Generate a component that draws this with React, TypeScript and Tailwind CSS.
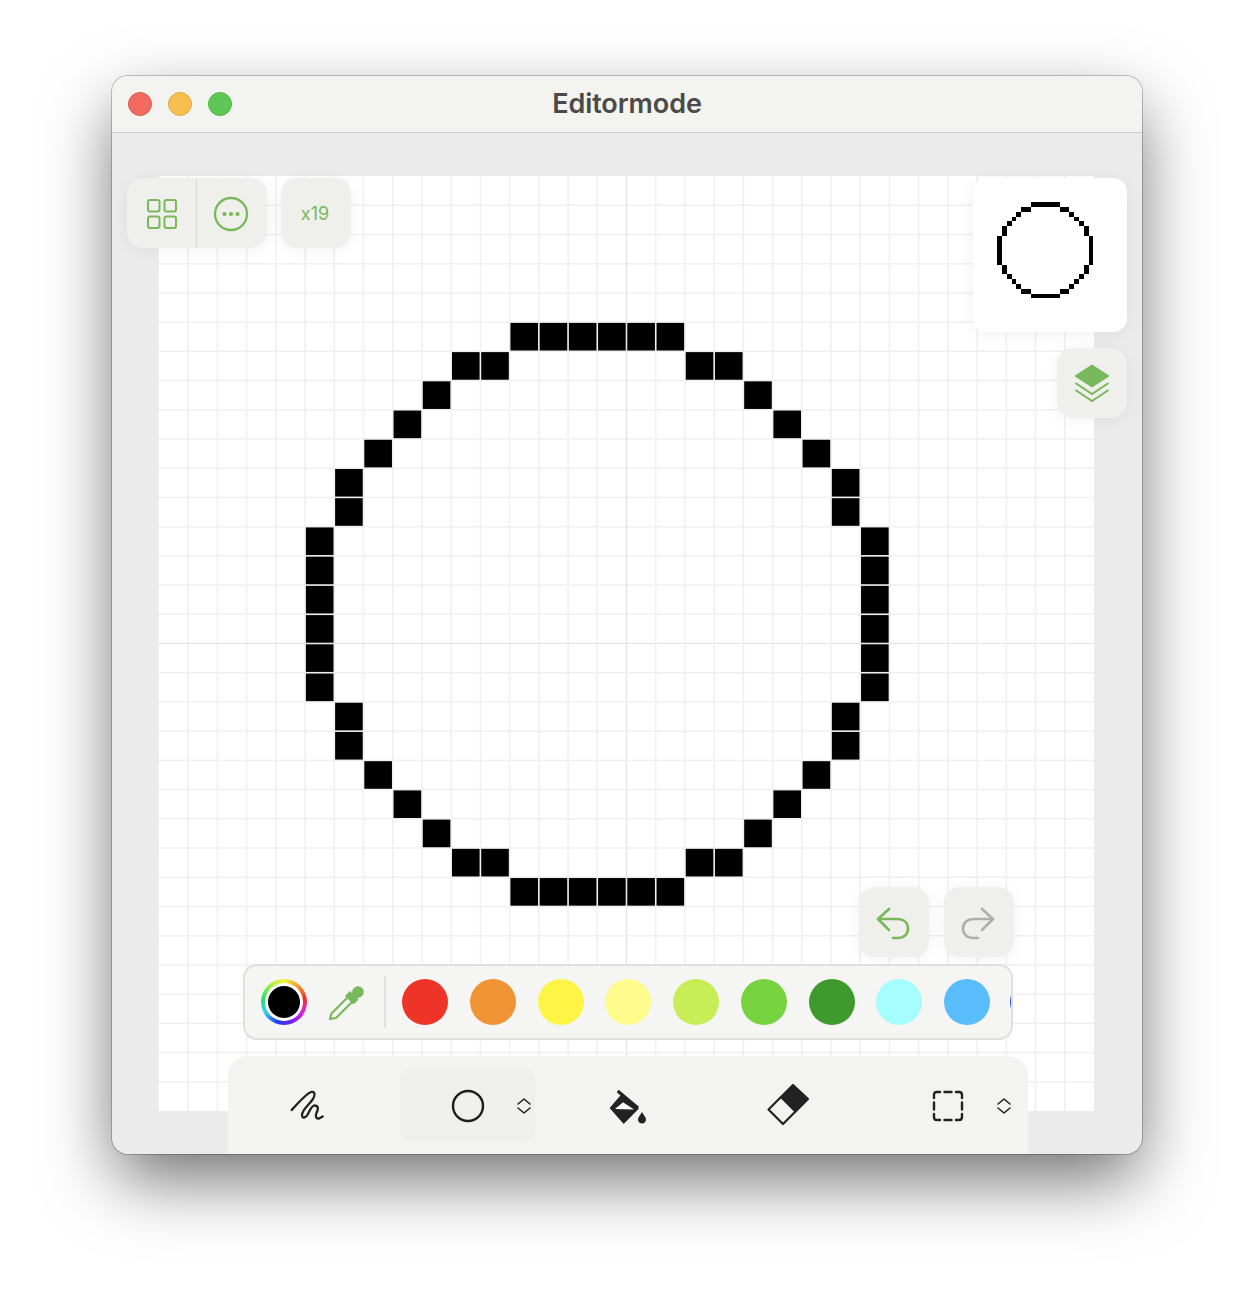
import React from "react";

const GREEN = "#7ab85c";
const CELL = 935 / 32;

const ROWS: [number, number[]][] = [
  [5, [12, 13, 14, 15, 16, 17]],
  [6, [10, 11, 18, 19]],
  [7, [9, 20]],
  [8, [8, 21]],
  [9, [7, 22]],
  [10, [6, 23]],
  [11, [6, 23]],
  [12, [5, 24]],
  [13, [5, 24]],
  [14, [5, 24]],
  [15, [5, 24]],
  [16, [5, 24]],
  [17, [5, 24]],
  [18, [6, 23]],
  [19, [6, 23]],
  [20, [7, 22]],
  [21, [8, 21]],
  [22, [9, 20]],
  [23, [10, 11, 18, 19]],
  [24, [12, 13, 14, 15, 16, 17]],
];
const PIXELS = ROWS.flatMap(([r, cs]) => cs.map((c) => ({ r, c })));
const LINES = Array.from({ length: 31 }, (_, i) => i + 1);
const SWATCHES = ["#ee3428", "#f19436", "#fdf445", "#fffb8d", "#c8ee57", "#76d23e", "#3f9a2e", "#a6fdfd", "#59bcfb"];

function PixelCanvas() {
  return (
    <svg width="935" height="935" viewBox="0 0 935 935" className="block">
      <rect width="935" height="935" fill="#fff" />
      {LINES.map((i) => (
        <g key={i} stroke={i === 16 ? "#e2e2e2" : "#f0f0f0"} strokeWidth={i === 16 ? 1.2 : 1.5}>
          <line x1={i * CELL} x2={i * CELL} y1="0" y2="935" />
          <line y1={i * CELL} y2={i * CELL} x1="0" x2="935" />
        </g>
      ))}
      {PIXELS.map(({ r, c }) => (
        <rect key={`${r}-${c}`} x={c * CELL + 0.8} y={r * CELL + 0.8} width={CELL - 1.6} height={CELL - 1.6} fill="#000" />
      ))}
    </svg>
  );
}

function Preview() {
  return (
    <svg width="154" height="154" viewBox="0 0 32 32" className="block" shapeRendering="crispEdges">
      {PIXELS.map(({ r, c }) => (
        <rect key={`${r}-${c}`} x={c} y={r} width="1" height="1" fill="#000" />
      ))}
    </svg>
  );
}

function Chevrons() {
  return (
    <svg width="16" height="18" viewBox="0 0 16 18" fill="none" stroke="#222" strokeWidth="1.6" strokeLinejoin="round" strokeLinecap="round">
      <path d="M2 7 L8 2 L14 7" />
      <path d="M2 11 L8 16 L14 11" />
    </svg>
  );
}

const floatBtn = "bg-[#efefeb] shadow-[0_2px_16px_rgba(0,0,0,0.06)] flex items-center justify-center";

export default function App() {
  return (
    <div className="h-[1302px] w-full overflow-hidden bg-white pl-[112px] pt-[76px]" style={{ fontFamily: "Inter, 'Liberation Sans', sans-serif" }}>
      <div className="relative flex h-[1078px] w-[1030px] flex-col overflow-hidden rounded-[16px] bg-[#ebebeb] shadow-[0_0_0_1px_rgba(0,0,0,0.22),0_28px_70px_-4px_rgba(0,0,0,0.58)]">
        {/* Title bar */}
        <div className="relative flex h-[57px] shrink-0 items-center justify-center border-b border-[#c9c9c6] bg-[#f3f3ef] pb-[2px]">
          <div className="absolute left-[16px] top-[16px] flex gap-[16px]">
            <div className="h-[24px] w-[24px] rounded-full border border-[#dc5a50] bg-[#f2695e]" />
            <div className="h-[24px] w-[24px] rounded-full border border-[#deaa42] bg-[#f7bf4f]" />
            <div className="h-[24px] w-[24px] rounded-full border border-[#55b548] bg-[#5fc754]" />
          </div>
          <span className="text-[27px] font-semibold leading-none tracking-[-0.1px] text-[#4a4a4a]">Editormode</span>
        </div>

        {/* Canvas */}
        <div className="px-[47px] pt-[43px]">
          <PixelCanvas />
        </div>

        {/* Top-left controls */}
        <div className={`${floatBtn} absolute left-[15px] top-[102px] h-[70px] w-[140px] rounded-[16px]`}>
          <div className="flex h-full w-[70px] items-center justify-center border-r-[1.5px] border-[#d9d9d5] pl-[1px] pt-[1px]">
            <svg width="32" height="32" viewBox="0 0 32 32" fill="none" stroke={GREEN} strokeWidth="2">
              <rect x="2" y="2" width="11.500" height="11.500" rx="2" />
              <rect x="18.500" y="2" width="11.500" height="11.500" rx="2" />
              <rect x="2" y="18.500" width="11.500" height="11.500" rx="2" />
              <rect x="18.500" y="18.500" width="11.500" height="11.500" rx="2" />
            </svg>
          </div>
          <div className="flex h-full w-[70px] items-center justify-center pr-[2px] pt-[1px]">
            <svg width="36" height="36" viewBox="0 0 36 36" fill="none">
              <circle cx="18" cy="18" r="16" stroke={GREEN} strokeWidth="2.3" />
              <circle cx="11.500" cy="18" r="2.100" fill={GREEN} />
              <circle cx="18" cy="18" r="2.100" fill={GREEN} />
              <circle cx="24.500" cy="18" r="2.100" fill={GREEN} />
            </svg>
          </div>
        </div>
        <div className={`${floatBtn} absolute left-[169px] top-[102px] h-[70px] w-[70px] rounded-[16px] pr-[2px] pt-[1px] text-[18px] text-[#7ab85c]`}>x19</div>

        {/* Preview + layers */}
        <div className="absolute left-[861px] top-[102px] h-[154px] w-[154px] rounded-[14px] bg-white shadow-[0_2px_16px_rgba(0,0,0,0.06)]">
          <Preview />
        </div>
        <div className={`${floatBtn} absolute left-[945px] top-[272px] h-[70px] w-[70px] rounded-[16px]`}>
          <svg width="36" height="38" viewBox="0 0 36 38" fill="none">
            <path d="M18 1 L35 12 L18 23 L1 12 Z" fill={GREEN} stroke={GREEN} strokeLinejoin="round" />
            <path d="M1.500 19 L18 30 L34.500 19" stroke={GREEN} strokeWidth="2" />
            <path d="M1.500 26 L18 37 L34.500 26" stroke={GREEN} strokeWidth="2" />
          </svg>
        </div>

        {/* Undo / redo */}
        <div className={`${floatBtn} absolute left-[747px] top-[811px] h-[70px] w-[70px] rounded-[16px] pr-[2px] pt-[2px]`}>
          <svg width="36" height="36" viewBox="0 0 36 36" fill="none" stroke={GREEN} strokeWidth="2.600" strokeLinecap="round" strokeLinejoin="round">
            <path d="M14 4 L3 14 L14 25" />
            <path d="M3 14 H22 C29 14 33 18 33 23.500 C33 29 29 33 23 33 H18" />
          </svg>
        </div>
        <div className={`${floatBtn} absolute left-[832px] top-[811px] h-[70px] w-[70px] rounded-[16px] pr-[2px] pt-[2px]`}>
          <svg width="36" height="36" viewBox="0 0 36 36" fill="none" stroke="#aeaeae" strokeWidth="2.600" strokeLinecap="round" strokeLinejoin="round">
            <path d="M22 4 L33 14 L22 25" />
            <path d="M33 14 H14 C7 14 3 18 3 23.500 C3 29 7 33 13 33 H18" />
          </svg>
        </div>

        {/* Palette */}
        <div className="absolute left-[131px] top-[888px] flex h-[76px] w-[770px] items-center gap-[20px] overflow-hidden rounded-[14px] border-2 border-[#dfdfdb] bg-[#f5f5f3] pl-[16px]">
          <div className="flex h-[46px] w-[46px] shrink-0 items-center justify-center rounded-full bg-[conic-gradient(#f5f53a,#f0a030,#ee3030,#e020e0,#7020f0,#2040f0,#30d0f0,#30e060,#a0f040,#f5f53a)]">
            <div className="flex h-[38px] w-[38px] items-center justify-center rounded-full bg-white">
              <div className="h-[32px] w-[32px] rounded-full bg-black" />
            </div>
          </div>
          <svg width="40" height="40" viewBox="0 0 40 40" fill="none" className="shrink-0">
            <path d="M3 37 L4.500 31.500 L21 15 L25.500 19.500 L9 36 Z" stroke={GREEN} strokeWidth="2.200" strokeLinejoin="round" />
            <path d="M18.500 14 L23 9.500 L31 17.500 L26.500 22 Z" fill={GREEN} stroke={GREEN} strokeLinejoin="round" />
            <circle cx="31" cy="10" r="5.800" fill={GREEN} />
            <path d="M24 12 L28 6 L35 13 L29 17 Z" fill={GREEN} />
          </svg>
          <div className="-ml-[3px] h-[52px] w-[2px] shrink-0 bg-[#e0e0dc]" />
          <div className="-ml-[4px] flex gap-[21.75px]">
            {SWATCHES.map((c) => (
              <div key={c} className="h-[46px] w-[46px] shrink-0 rounded-full" style={{ background: c }} />
            ))}
            <div className="-ml-[2px] h-[46px] w-[46px] shrink-0 rounded-full bg-[#2b55ee]" />
          </div>
        </div>

        {/* Tool bar */}
        <div className="absolute bottom-0 left-[116px] grid h-[98px] w-[800px] grid-cols-5 rounded-t-[20px] bg-[#f3f3ef] pt-[12px]">
          <div className="flex h-[74px] items-center justify-center pt-[2px]">
            <svg width="40" height="40" viewBox="0 0 40 40" fill="none" stroke="#222" strokeWidth="2.300" strokeLinecap="round" strokeLinejoin="round">
              <path d="M3.700 24 C10 17 18 8 23 6 C27 5 27.500 9 25 13 C21 19 14 24 14 29 C14 33 18 32 20 28 C22 24 24 19 27 19.500 C31 20 30 24 28.500 27 C27 30 28 33 31 32.500 L34.700 30.500" />
            </svg>
          </div>
          <div className="flex justify-center">
            <div className="relative -ml-[1px] flex h-[74px] w-[135px] items-center justify-center rounded-[12px] bg-[#efefeb] pt-[2px]">
              <svg width="36" height="36" viewBox="0 0 36 36" fill="none" stroke="#1e1e1e" strokeWidth="2.400">
                <circle cx="18" cy="18" r="15" />
              </svg>
              <div className="absolute left-[116px] top-[29px]">
                <Chevrons />
              </div>
            </div>
          </div>
          <div className="flex h-[74px] items-center justify-center pt-[2px]">
            <svg width="40" height="40" viewBox="0 0 40 40">
              <path d="M9.700 5 L30 22" stroke="#222" strokeWidth="3" fill="none" />
              <path d="M13.700 9 L30 22.500 L15.700 37 L2.500 22 Z" fill="#222" stroke="#222" strokeWidth="1.200" strokeLinejoin="round" />
              <path d="M15 16.300 L26 23.500 L7 23 Z" fill="#fff" />
              <path d="M34 26 C35.500 29 38 31 38 33.500 C38 36 36 37.500 34 37.500 C32 37.500 30 36 30 33.500 C30 31 32.500 29 34 26 Z" fill="#222" />
            </svg>
          </div>
          <div className="flex h-[74px] items-center justify-center">
            <svg width="44" height="44" viewBox="0 0 44 44" fill="none" className="-mt-[2px]">
              <path d="M27 3 L42 17 L29.500 29.500 L15 15 Z" fill="#222" stroke="#222" strokeWidth="2.200" strokeLinejoin="round" />
              <path d="M15 15 L2.500 27.500 L17 42 L29.500 29.500" stroke="#222" strokeWidth="2.200" strokeLinejoin="round" />
            </svg>
          </div>
          <div className="relative flex h-[74px] items-center justify-center pt-[2px]">
            <svg width="32" height="32" viewBox="0 0 32 32" fill="none" stroke="#222" strokeWidth="2.400" strokeLinecap="round">
              <path d="M2 8 V5 Q2 2 5 2 H8" />
              <path d="M24 2 H27 Q30 2 30 5 V8" />
              <path d="M30 24 V27 Q30 30 27 30 H24" />
              <path d="M8 30 H5 Q2 30 2 27 V24" />
              <path d="M12.500 2 H19.500" />
              <path d="M12.500 30 H19.500" />
              <path d="M2 12.500 V19.500" />
              <path d="M30 12.500 V19.500" />
            </svg>
            <div className="absolute left-[128px] top-[29px]">
              <Chevrons />
            </div>
          </div>
        </div>
      </div>
    </div>
  );
}
